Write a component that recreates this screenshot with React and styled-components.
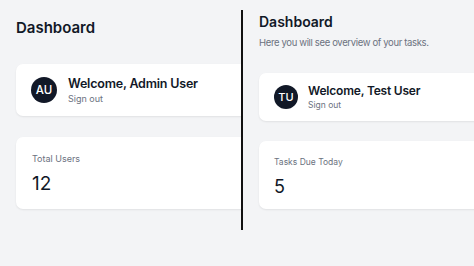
import React from "react";
import styled, { createGlobalStyle } from "styled-components";

const Global = createGlobalStyle`
  html, body { margin: 0; padding: 0; }
  body {
    background: #f3f4f6;
    font-family: Inter, "Noto Sans", "Liberation Sans", sans-serif;
    color: #111827;
    width: 474px;
    height: 266px;
    overflow: hidden;
  }
`;

const Page = styled.div`
  display: flex;
  align-items: flex-start;
  width: 474px;
  height: 266px;
  background: #f3f4f6;
`;

const Panel = styled.section`
  box-sizing: border-box;
  width: ${(p) => p.$width};
  flex: ${(p) => (p.$grow ? "1 1 auto" : "0 0 auto")};
  height: 266px;
  overflow: hidden;
  padding: ${(p) => p.$pad};
  display: flex;
  flex-direction: column;
`;

const Divider = styled.div`
  flex: 0 0 auto;
  width: 2px;
  height: 220px;
  margin-top: 10px;
  background: #111;
`;

const Heading = styled.h1`
  margin: 0;
  font-size: ${(p) => p.$size}px;
  line-height: 20px;
  font-weight: 600;
  color: #111827;
`;

const Subtitle = styled.p`
  margin: 4px 0 0;
  font-size: 9.5px;
  letter-spacing: -0.35px;
  line-height: 14px;
  color: #6b7280;
`;

const Card = styled.div`
  box-sizing: border-box;
  width: 340px;
  flex: 0 0 auto;
  height: ${(p) => p.$h}px;
  margin-top: ${(p) => p.$mt}px;
  background: #fff;
  border-radius: 7px;
  box-shadow: 0 1px 2px rgba(0, 0, 0, 0.08);
  padding: ${(p) => p.$pad};
`;

const UserCard = styled(Card)`
  display: flex;
  align-items: center;
  gap: ${(p) => p.$gap}px;
`;

const Avatar = styled.div`
  width: ${(p) => p.$d}px;
  height: ${(p) => p.$d}px;
  border-radius: 50%;
  background: #111827;
  color: #fff;
  display: flex;
  align-items: center;
  justify-content: center;
  font-size: ${(p) => p.$fs}px;
  font-weight: 500;
  flex: 0 0 auto;
`;

const UserText = styled.div`
  display: flex;
  flex-direction: column;
`;

const Welcome = styled.div`
  font-size: ${(p) => p.$size}px;
  letter-spacing: -0.2px;
  line-height: 16px;
  font-weight: 600;
  color: #111827;
`;

const SignOut = styled.a`
  font-size: ${(p) => p.$size}px;
  line-height: 13px;
  color: #6b7280;
  cursor: pointer;
`;

const StatLabel = styled.div`
  font-size: ${(p) => p.$size}px;
  line-height: 14px;
  color: #6b7280;
`;

const StatValue = styled.div`
  margin-top: 6px;
  font-size: ${(p) => p.$size}px;
  line-height: 24px;
  font-weight: 400;
  color: #111827;
`;

function UserBox({ initials, name, h, mt, d, fs, pad, gap, size, small }) {
  return (
    <UserCard $h={h} $mt={mt} $pad={pad} $gap={gap}>
      <Avatar $d={d} $fs={fs}>{initials}</Avatar>
      <UserText>
        <Welcome $size={size}>Welcome, {name}</Welcome>
        <SignOut $size={small}>Sign out</SignOut>
      </UserText>
    </UserCard>
  );
}

function StatBox({ label, value, h, mt, pad, size, small }) {
  return (
    <Card $h={h} $mt={mt} $pad={pad}>
      <StatLabel $size={small}>{label}</StatLabel>
      <StatValue $size={size}>{value}</StatValue>
    </Card>
  );
}

export default function App() {
  return (
    <>
      <Global />
      <Page>
        <Panel $width="241px" $pad="18px 0 0 16px">
          <Heading $size={15}>Dashboard</Heading>
          <UserBox
            initials="AU"
            name="Admin User"
            h={52}
            mt={26}
            d={26}
            fs={11.5}
            pad="0 15px"
            gap={11}
            size={12.5}
            small={9}
          />
          <StatBox label="Total Users" value="12" h={72} mt={21} pad="15px 16px" size={19} small={9} />
        </Panel>
        <Divider />
        <Panel $grow $pad="12px 0 0 16px">
          <Heading $size={14}>Dashboard</Heading>
          <Subtitle>Here you will see overview of your tasks.</Subtitle>
          <UserBox
            initials="TU"
            name="Test User"
            h={48}
            mt={23}
            d={24}
            fs={11}
            pad="0 15px"
            gap={10}
            size={12}
            small={8.5}
          />
          <StatBox label="Tasks Due Today" value="5" h={68} mt={20} pad="14px 15px" size={18} small={8.5} />
        </Panel>
      </Page>
    </>
  );
}
